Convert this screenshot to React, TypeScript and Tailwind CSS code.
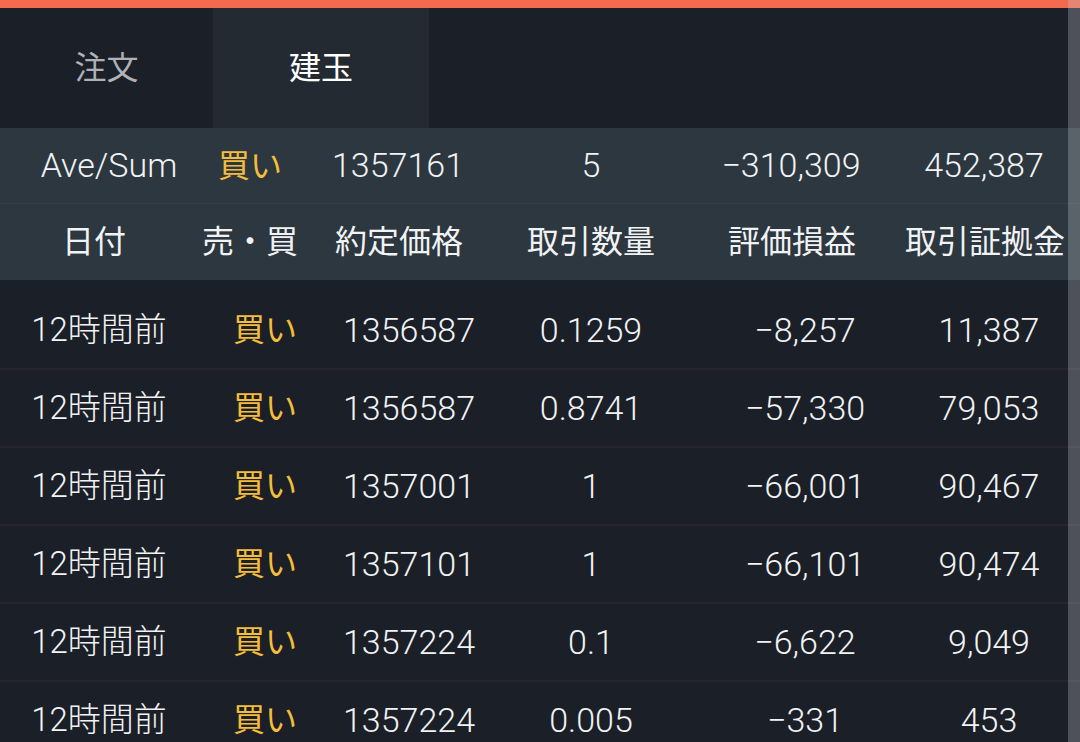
import React from "react";

const font = { fontFamily: '"Roboto", "Noto Sans CJK JP", sans-serif' };

const rows = [
  ["12時間前", "買い", "1356587", "0.1259", "−8,257", "11,387"],
  ["12時間前", "買い", "1356587", "0.8741", "−57,330", "79,053"],
  ["12時間前", "買い", "1357001", "1", "−66,001", "90,467"],
  ["12時間前", "買い", "1357101", "1", "−66,101", "90,474"],
  ["12時間前", "買い", "1357224", "0.1", "−6,622", "9,049"],
  ["12時間前", "買い", "1357224", "0.005", "−331", "453"],
];

export default function App() {
  return (
    <div
      className="relative w-[1080px] h-[742px] overflow-hidden bg-[#1b1f27] text-[#f1f2f3] font-light"
      style={font}
    >
      <div className="h-[8px] bg-[#f36a4f]" />
      <div className="flex h-[120px] bg-[#1b1f27] text-[32px] font-normal">
        <div className="w-[213px] flex items-center justify-center text-[#aeb1b5]">注文</div>
        <div className="w-[216px] flex items-center justify-center bg-[#232a32] text-white">建玉</div>
      </div>
      <div className="grid grid-cols-[218px_64px_232px_154px_246px_140px] h-[76px] items-center bg-[#2c3740] text-[34px] whitespace-nowrap border-b border-[#34404a]">
        <div className="text-center">Ave/Sum</div>
        <div className="text-center text-[#f4bd3a] font-normal text-[32px]">買い</div>
        <div className="text-center">1357161</div>
        <div className="text-center">5</div>
        <div className="text-center">−310,309</div>
        <div className="text-center">452,387</div>
      </div>
      <div className="grid grid-cols-[188px_124px_174px_210px_192px_194px] h-[76px] items-center bg-[#2c3740] text-[32px] whitespace-nowrap font-normal">
        <div className="text-center">日付</div>
        <div className="text-center">売・買</div>
        <div className="text-center">約定価格</div>
        <div className="text-center">取引数量</div>
        <div className="text-center">評価損益</div>
        <div className="text-center">取引証拠金</div>
      </div>
      <div className="pt-[12px]">
        {rows.map((r, i) => (
          <div
            key={i}
            className="grid grid-cols-[198px_134px_154px_210px_218px_150px] h-[78px] items-center text-[34px] whitespace-nowrap border-b-2 border-[#282530]"
          >
            <div className="text-center text-[33px]">{r[0]}</div>
            <div className="text-center text-[#f4bd3a] font-normal text-[32px]">{r[1]}</div>
            <div className="text-center">{r[2]}</div>
            <div className="text-center">{r[3]}</div>
            <div className="text-center">{r[4]}</div>
            <div className="text-center">{r[5]}</div>
          </div>
        ))}
      </div>
      <div className="absolute right-0 top-0 w-[12px] h-full bg-[rgba(200,200,205,0.3)]" />
    </div>
  );
}
